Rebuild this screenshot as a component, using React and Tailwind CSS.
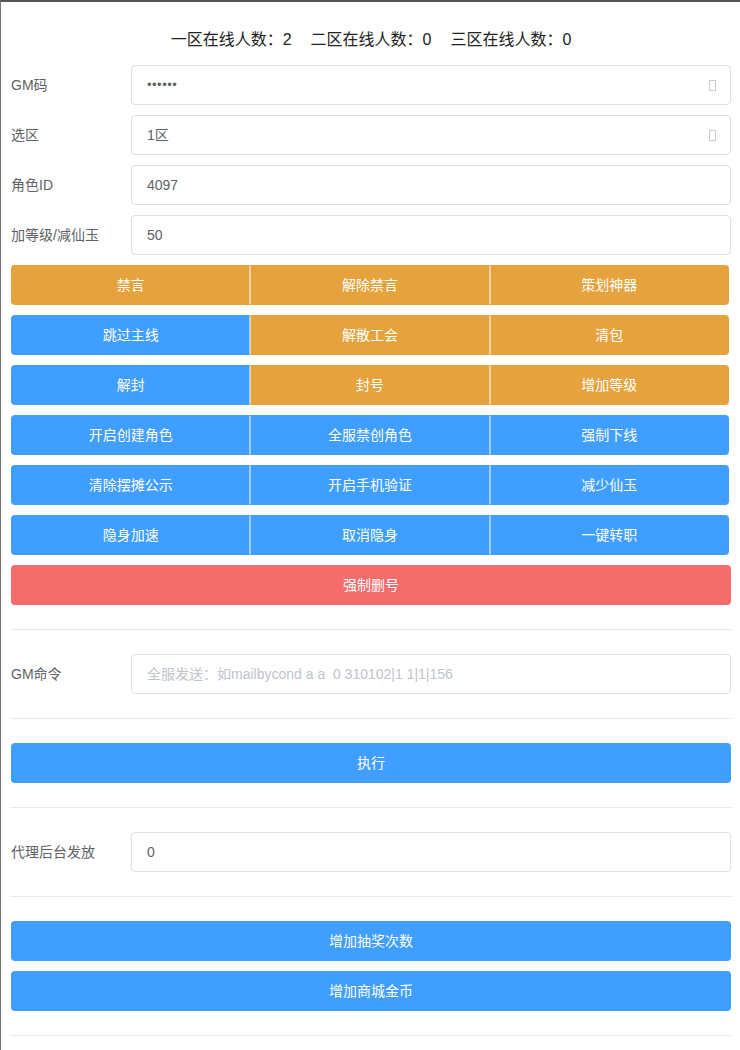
import React from "react";

const FONT = "font-['Liberation_Sans','Noto_Sans_CJK_SC',sans-serif]";

function Field({ label, value, placeholder, icon, password }) {
  return (
    <div className="flex items-center h-[40px] mb-[10px]">
      <div className="w-[120px] text-[14px] text-[#606266]">{label}</div>
      <div className="flex-1 h-[40px] border border-[#dcdfe6] rounded-[4px] flex items-center px-[15px] text-[14px] text-[#606266] bg-white">
        {password ? (
          <span className="text-[13px] tracking-[0.5px] text-[#606266]">••••••</span>
        ) : value !== undefined ? (
          <span>{value}</span>
        ) : (
          <span className="text-[#c0c4cc] whitespace-pre">{placeholder}</span>
        )}
        <div className="flex-1" />
        {icon && <span className="w-[7px] h-[11px] border border-[#c8cbd1] mr-[-1px]" />}
      </div>
    </div>
  );
}

const ORANGE = "bg-[#e6a23c]";
const BLUE = "bg-[#409eff]";

function Group({ items }) {
  return (
    <div className="flex w-[718px] h-[40px] mb-[10px]">
      {items.map(([t, c], i) => {
        const first = i === 0;
        const last = i === items.length - 1;
        const cls = [
          "flex-1 flex items-center justify-center text-[14px] text-white border-y",
          c === "o" ? ORANGE + " border-y-[#e6a23c]" : BLUE + " border-y-[#409eff]",
          first ? "rounded-l-[4px]" : "",
          last ? "rounded-r-[4px]" : "",
          first
            ? c === "o" ? "border-l border-l-[#e6a23c]" : "border-l border-l-[#409eff]"
            : "border-l border-l-[rgba(255,255,255,0.5)]",
          last
            ? c === "o" ? "border-r border-r-[#e6a23c]" : "border-r border-r-[#409eff]"
            : "border-r border-r-[rgba(255,255,255,0.5)]",
        ].join(" ");
        return (
          <div key={i} className={cls}>
            {t}
          </div>
        );
      })}
    </div>
  );
}

function Wide({ text, color = BLUE, mb = true }) {
  return (
    <div
      className={`w-[720px] h-[40px] rounded-[4px] flex items-center justify-center text-[14px] text-white ${color} ${
        mb ? "mb-[10px]" : ""
      }`}
    >
      {text}
    </div>
  );
}

function Divider() {
  return <div className="w-[720px] h-px bg-[#e4e7ed] my-[24px]" />;
}

export default function App() {
  return (
    <div className={`w-[740px] min-h-[1050px] bg-white border-t-2 border-t-[#555] border-l border-l-[#777] ${FONT}`}>
      <div className="pl-[10px] pr-[9px]">
        <div className="pt-[26px] h-[50px] mb-[13px] flex justify-center gap-[19px] text-[16px] text-[#222] leading-[24px]">
          <span>一区在线人数：2</span>
          <span>二区在线人数：0</span>
          <span>三区在线人数：0</span>
        </div>
        <div>
          <Field label="GM码" password icon />
          <Field label="选区" value="1区" icon />
          <Field label="角色ID" value="4097" />
          <Field label="加等级/减仙玉" value="50" />
        </div>
        <Group items={[["禁言", "o"], ["解除禁言", "o"], ["策划神器", "o"]]} />
        <Group items={[["跳过主线", "b"], ["解散工会", "o"], ["清包", "o"]]} />
        <Group items={[["解封", "b"], ["封号", "o"], ["增加等级", "o"]]} />
        <Group items={[["开启创建角色", "b"], ["全服禁创角色", "b"], ["强制下线", "b"]]} />
        <Group items={[["清除摆摊公示", "b"], ["开启手机验证", "b"], ["减少仙玉", "b"]]} />
        <Group items={[["隐身加速", "b"], ["取消隐身", "b"], ["一键转职", "b"]]} />
        <Wide text="强制删号" color="bg-[#f56c6c]" mb={false} />
        <Divider />
        <div className="[&>div]:mb-0">
          <Field label="GM命令" placeholder="全服发送：如mailbycond a a  0 310102|1 1|1|156" />
        </div>
        <Divider />
        <Wide text="执行" mb={false} />
        <Divider />
        <div className="[&>div]:mb-0">
          <Field label="代理后台发放" value="0" />
        </div>
        <Divider />
        <Wide text="增加抽奖次数" />
        <Wide text="增加商城金币" mb={false} />
        <Divider />
      </div>
    </div>
  );
}
